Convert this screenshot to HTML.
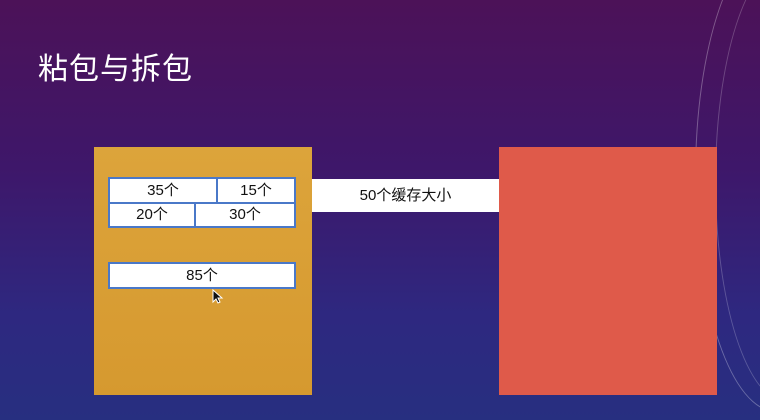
<!DOCTYPE html>
<html><head><meta charset="utf-8"><style>
body{margin:0;width:760px;height:420px;overflow:hidden;position:relative;
background:linear-gradient(180deg,#4c1258 0%,#3e176a 40%,#2e2880 75%,#272f80 100%);
font-family:"Liberation Sans","Noto Sans CJK SC",sans-serif;}
.t{position:absolute;left:38px;top:44px;color:#fff;font-size:30px;letter-spacing:1px}
.o{position:absolute;left:94px;top:147px;width:218px;height:248px;background:linear-gradient(180deg,#dca43b,#d6992f)}
.r{position:absolute;left:499px;top:147px;width:218px;height:248px;background:#df5a4a}
.band{position:absolute;left:312px;top:179px;width:187px;height:33px;background:#fff;font-size:15px;line-height:33px;text-align:center;color:#111}
.b{position:absolute;box-sizing:border-box;background:#fff;border:2px solid #4a78c8;font-size:15px;text-align:center;color:#111}
.c1,.c2{position:absolute;border:1px solid #aaa;border-radius:50%}
</style></head><body>
<div class="c1" style="left:695px;top:-60px;width:160px;height:470px;border-color:rgba(255,255,255,.3)"></div>
<div class="c2" style="left:715px;top:-40px;width:140px;height:440px;border-color:rgba(255,255,255,.22)"></div>
<div class="t">粘包与拆包</div>
<div class="o"></div>
<div class="r"></div>
<div class="band">50个缓存大小</div>
<div class="b" style="left:108px;top:177px;width:110px;height:27px;line-height:23px">35个</div>
<div class="b" style="left:216px;top:177px;width:80px;height:27px;line-height:23px">15个</div>
<div class="b" style="left:108px;top:202px;width:88px;height:26px;line-height:22px">20个</div>
<div class="b" style="left:194px;top:202px;width:102px;height:26px;line-height:22px">30个</div>
<div class="b" style="left:108px;top:262px;width:188px;height:27px;line-height:23px">85个</div>
<svg style="position:absolute;left:208px;top:286px" width="16" height="18"><path d="M5 4 L5 16 L8 13 L10 17 L12 16 L10 12 L14 12 Z" fill="#111" stroke="#fff" stroke-width="1"/></svg>
</body></html>
